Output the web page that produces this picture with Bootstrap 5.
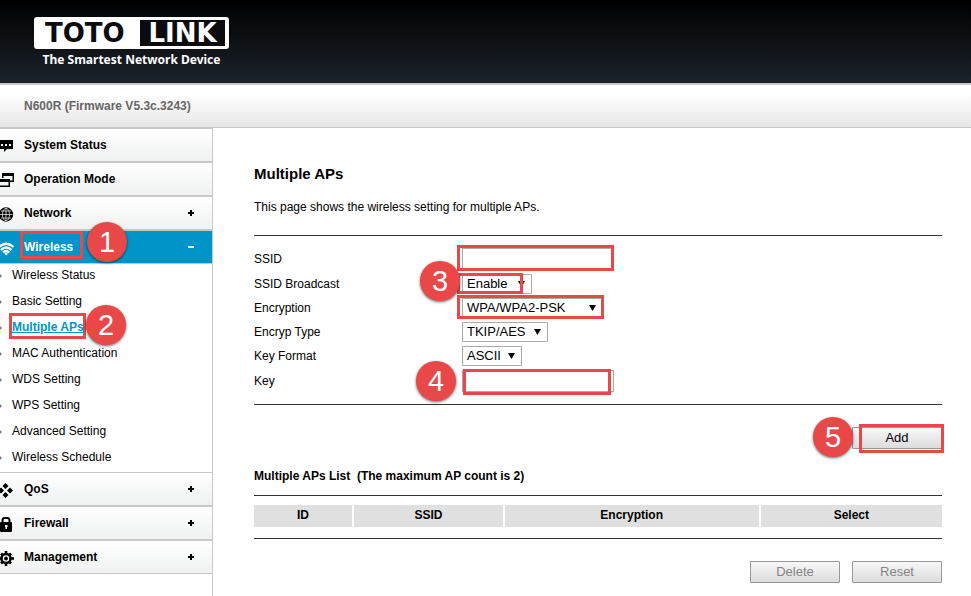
<!DOCTYPE html>
<html lang="en">
<head>
<meta charset="utf-8">
<meta name="viewport" content="width=device-width, initial-scale=1">
<title>TOTOLINK N600R - Multiple APs</title>
<link href="https://cdn.jsdelivr.net/npm/bootstrap@5.3.0/dist/css/bootstrap.min.css" rel="stylesheet">
<style>
body{font-family:"Liberation Sans",Arial,sans-serif;font-size:12px;line-height:16px;color:#000;background:#fff}
.top-banner{height:83px;background:linear-gradient(#000,#0b0e11 40%,#1c232b);padding:17px 0 0 34px}
.brand-box{width:195px;height:32px;border-radius:3px;background:#fff;padding:3px 4px 3px 11px;font:bold 26px/27px "DejaVu Sans",sans-serif;color:#0a0c0f}
.brand-link{width:85px;height:26px;background:#0a0c0f;color:#fff}
.brand-tag{width:195px;font:bold 12px/22px "Noto Sans",sans-serif;color:#fff}
.model-bar{height:45px;border-top:2px solid #c8c8c8;border-bottom:1px solid #c8c8c8;padding-left:24px;background:linear-gradient(#fff 20%,#e6e6e6);color:#666}
.shell{min-height:calc(100vh - 128px)}
.side{width:213px;border-right:1px solid #c8c8c8}
.side-item{height:34px;border-top:1px solid #c8c8c8;border-bottom:1px solid #c8c8c8;background:linear-gradient(#fff,#f0f1f1);color:#000;padding-right:18px}
.side-item.current{background:#0095c8;color:#fff}
.side-item svg,.side-sub svg{flex:none}
.side-icon{width:14px;height:16px;margin:2px 10px 0 0}
.side-sub a{height:26px;color:#000;padding-bottom:5px}
.side-sub a.chosen{color:#0095c8;font-weight:bold}
.side-sub svg{width:3px;height:4px;margin:3px 9px 0 0}
.panel{padding:36px 29px 13px 41px}
.panel h1{font-size:15px;line-height:20px;margin-bottom:15px}
.rule{height:1px;background:#333}
.form-rows{padding:10px 0}
.setting{height:24px}
.setting.tall{height:26px}
.setting label{width:208px}
.box-input{width:152px;height:22px;border:1px solid #a9a9a9;padding:0 3px}
.pick{appearance:none;height:20px;border:1px solid #a9a9a9;border-radius:1px;padding:0 16px 0 4px;font-size:13px;line-height:18px;color:#000;width:60px;
 background:#fff url("data:image/svg+xml,%3Csvg xmlns='http://www.w3.org/2000/svg' viewBox='0 0 7 6'%3E%3Cpath d='M0 0h7L3.5 6z'/%3E%3C/svg%3E") no-repeat right 6px center/7px 6px}
.pick-m{width:70px}.pick-l{width:86px}.pick-xl{width:141px}
.act{width:90px;height:22px;border:1px solid #999;border-radius:1px;background:linear-gradient(#f8f8f8,#dcdcdc);font-size:13px;line-height:18px;color:#000;padding:0}
.act:disabled{color:#848484}
.add-row{padding:22px 0 19px}
.list-title{font-size:12px;line-height:16px;margin:0 0 11px}
.ap-table{margin:9px 0 11px}
.ap-table th{background:#e0e0e0;height:22px;padding:0 0 3px;border-right:2px solid #fff}
.ap-table th:last-child{border-right:0}
.w-id{width:14.4%}.w-ssid{width:21.9%}.w-enc{width:37.2%}
.end-row{padding-top:22px;gap:12px}
/* tutorial callouts laid over the controls */
.ring,.num{position:absolute;pointer-events:none}
.ring{border:3px solid #e84848;z-index:2}
.num{width:40px;height:40px;border-radius:50%;background:#e84848;color:#fff;font-size:29px;line-height:40px;text-align:center;box-shadow:0 1px 3px rgba(0,0,0,.6);z-index:3}
.ring-a{left:20px;top:1px;width:63px;height:28px}.num-a{left:87px;top:-8px}
.ring-b{left:9px;top:-3px;width:77px;height:26px}.num-b{left:86px;top:-11px}
.ring-c{left:-5px;top:-3px;width:157px;height:26px}
.ring-d{left:-5px;top:-1px;width:66px;height:21px}.num-d{left:-42px;top:-13px}
.ring-e{left:-5px;top:-3px;width:147px;height:24px}
.ring-f{left:1px;top:-1px;width:148px;height:26px}.num-f{left:-46px;top:-9px}
.ring-g{left:7px;top:-3px;width:85px;height:29px}.num-g{left:-39px;top:-10px}
</style>
</head>
<body>
<header>
 <div class="top-banner">
  <div class="brand-box d-flex justify-content-between"><span>TOTO</span><span class="brand-link text-center">LINK</span></div>
  <div class="brand-tag text-center">The Smartest Network Device</div>
 </div>
 <div class="model-bar d-flex align-items-center fw-bold">N600R (Firmware V5.3c.3243)</div>
</header>
<div class="shell d-flex">
 <nav class="side flex-shrink-0" aria-label="Main">
  <a href="#" class="side-item d-flex align-items-center fw-bold text-decoration-none"><svg class="side-icon" viewBox="0 0 14 16"><path d="M0 2h13v9H7l-3 3v-3H0z"/><path d="M1 6h2v2H1zm4 0h2v2H5zm4 0h2v2H9z" fill="#fff"/></svg><span class="flex-grow-1">System Status</span></a>
  <a href="#" class="side-item d-flex align-items-center fw-bold text-decoration-none"><svg class="side-icon" viewBox="0 0 14 16"><path d="M2 1h12v9h-4V8.500h2.500V4h-9v2H2zM0 7h10v8H0v-1.500h8.500V10H0z"/></svg><span class="flex-grow-1">Operation Mode</span></a>
  <a href="#" class="side-item d-flex align-items-center fw-bold text-decoration-none"><svg class="side-icon" viewBox="0 0 14 16"><circle cx="6" cy="8.500" r="7.200"/><g fill="none" stroke="#fff" stroke-width=".7"><ellipse cx="6" cy="8.500" rx="3.500" ry="6.200"/><path d="M6 2v13M0 8.500h12.500M1 5h10M1 12h10"/></g></svg><span class="flex-grow-1">Network</span><svg width="6" height="6"><path d="M0 3h6M3 0v6" stroke="#000" stroke-width="2"/></svg></a>
  <div class="position-relative">
   <a href="#" class="side-item current d-flex align-items-center fw-bold text-decoration-none"><svg class="side-icon" viewBox="0 0 14 16" fill="none" stroke="#fff" stroke-width="2.300"><path d="M-1 7Q6 .5 13.500 7M1 10Q6 5 11.500 10M3.200 12.500Q6 9.500 9.300 12.500"/><circle cx="6.200" cy="13.800" r="1.400" fill="#fff" stroke="none"/></svg><span class="flex-grow-1">Wireless</span><svg width="6" height="6"><path d="M0 3h6" stroke="#fff" stroke-width="2"/></svg></a>
   <span class="ring ring-a"></span><span class="num num-a">1</span>
  </div>
  <div class="side-sub">
   <a href="#" class="d-flex align-items-center text-decoration-none"><svg viewBox="0 0 3 4"><path d="M0 0l2 2-2 2z" fill="#777c88"/></svg>Wireless Status</a>
   <a href="#" class="d-flex align-items-center text-decoration-none"><svg viewBox="0 0 3 4"><path d="M0 0l2 2-2 2z" fill="#777c88"/></svg>Basic Setting</a>
   <div class="position-relative">
    <a href="#" class="chosen d-flex align-items-center text-decoration-none"><svg viewBox="0 0 3 4"><path d="M0 0l2 2-2 2z" fill="#777c88"/></svg><span class="text-decoration-underline">Multiple APs</span></a>
    <span class="ring ring-b"></span><span class="num num-b">2</span>
   </div>
   <a href="#" class="d-flex align-items-center text-decoration-none"><svg viewBox="0 0 3 4"><path d="M0 0l2 2-2 2z" fill="#777c88"/></svg>MAC Authentication</a>
   <a href="#" class="d-flex align-items-center text-decoration-none"><svg viewBox="0 0 3 4"><path d="M0 0l2 2-2 2z" fill="#777c88"/></svg>WDS Setting</a>
   <a href="#" class="d-flex align-items-center text-decoration-none"><svg viewBox="0 0 3 4"><path d="M0 0l2 2-2 2z" fill="#777c88"/></svg>WPS Setting</a>
   <a href="#" class="d-flex align-items-center text-decoration-none"><svg viewBox="0 0 3 4"><path d="M0 0l2 2-2 2z" fill="#777c88"/></svg>Advanced Setting</a>
   <a href="#" class="d-flex align-items-center text-decoration-none"><svg viewBox="0 0 3 4"><path d="M0 0l2 2-2 2z" fill="#777c88"/></svg>Wireless Schedule</a>
  </div>
  <a href="#" class="side-item d-flex align-items-center fw-bold text-decoration-none"><svg class="side-icon" viewBox="0 0 14 16"><path d="M5.500 1l3 3-3 3-3-3zM5.500 10l3 3-3 3-3-3zM1 5.500l3 3-3 3-3-3zM10 5.500l3 3-3 3-3-3z"/></svg><span class="flex-grow-1">QoS</span><svg width="6" height="6"><path d="M0 3h6M3 0v6" stroke="#000" stroke-width="2"/></svg></a>
  <a href="#" class="side-item d-flex align-items-center fw-bold text-decoration-none"><svg class="side-icon" viewBox="0 0 14 16"><path d="M2.500 8V4.500Q2.500 2 4.500 2h3Q9.500 2 9.500 4.500V8" fill="none" stroke="#000" stroke-width="2"/><rect y="6" width="12" height="10" rx="1"/><path d="M5 9h2.500v2H7v2H5.500v-2H5z" fill="#fff"/></svg><span class="flex-grow-1">Firewall</span><svg width="6" height="6"><path d="M0 3h6M3 0v6" stroke="#000" stroke-width="2"/></svg></a>
  <a href="#" class="side-item d-flex align-items-center fw-bold text-decoration-none"><svg class="side-icon" viewBox="0 0 14 16" fill="none" stroke="#000"><circle cx="6" cy="8.500" r="4.500" stroke-width="2.500"/><circle cx="6" cy="8.500" r="1.500" fill="#000"/><path d="M6 1v3M6 13v3M-1 8.500h2M11 8.500h3M1 3.500l1.500 1.500M9.500 12l1.500 1.500M11 3.500L9.500 5M1 13.500L2.500 12" stroke-width="2.600"/></svg><span class="flex-grow-1">Management</span><svg width="6" height="6"><path d="M0 3h6M3 0v6" stroke="#000" stroke-width="2"/></svg></a>
 </nav>
 <main class="panel flex-grow-1">
  <h1 class="fw-bold">Multiple APs</h1>
  <p class="mb-3 pb-1">This page shows the wireless setting for multiple APs.</p>
  <div class="rule"></div>
  <form>
   <div class="form-rows">
    <div class="setting tall d-flex align-items-center"><label for="ssid">SSID</label><div class="position-relative d-flex"><input id="ssid" type="text" class="box-input"><span class="ring ring-c"></span></div></div>
    <div class="setting d-flex align-items-center"><label for="bcast">SSID Broadcast</label><div class="position-relative d-flex"><select id="bcast" class="pick pick-m"><option>Enable</option><option>Disable</option></select><span class="ring ring-d"></span><span class="num num-d">3</span></div></div>
    <div class="setting d-flex align-items-center"><label for="enc">Encryption</label><div class="position-relative d-flex"><select id="enc" class="pick pick-xl"><option>WPA/WPA2-PSK</option></select><span class="ring ring-e"></span></div></div>
    <div class="setting d-flex align-items-center"><label for="etype">Encryp Type</label><select id="etype" class="pick pick-l"><option>TKIP/AES</option></select></div>
    <div class="setting d-flex align-items-center"><label for="kfmt">Key Format</label><select id="kfmt" class="pick"><option>ASCII</option></select></div>
    <div class="setting tall d-flex align-items-center"><label for="key">Key</label><div class="position-relative d-flex"><input id="key" type="text" class="box-input"><span class="ring ring-f"></span><span class="num num-f">4</span></div></div>
   </div>
   <div class="rule"></div>
   <div class="add-row d-flex justify-content-end"><div class="position-relative d-flex"><button type="button" class="act">Add</button><span class="ring ring-g"></span><span class="num num-g">5</span></div></div>
  </form>
  <h2 class="list-title fw-bold">Multiple APs List&nbsp; (The maximum AP count is 2)</h2>
  <div class="rule"></div>
  <table class="ap-table w-100 text-center"><thead><tr><th class="w-id">ID</th><th class="w-ssid">SSID</th><th class="w-enc">Encryption</th><th>Select</th></tr></thead></table>
  <div class="rule"></div>
  <div class="end-row d-flex justify-content-end"><button type="button" class="act" disabled>Delete</button><button type="button" class="act" disabled>Reset</button></div>
 </main>
</div>
<script src="https://cdn.jsdelivr.net/npm/bootstrap@5.3.0/dist/js/bootstrap.bundle.min.js"></script>
</body>
</html>
